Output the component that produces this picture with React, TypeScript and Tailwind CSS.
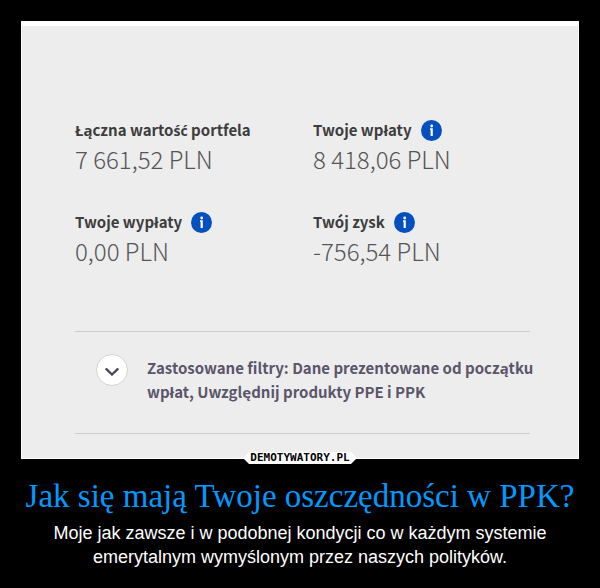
import type { ReactNode } from "react";

function InfoButton({ label }: { label: string }) {
  return (
    <button type="button" aria-label={label} className="flex size-[21px] items-center justify-center rounded-full bg-[#0550bf]">
      <svg viewBox="0 0 21 21" className="size-[21px]" fill="#fff" aria-hidden="true">
        <circle cx="10.7" cy="6" r="1.4" />
        <path d="M9 8.3h2.8v7.6H9.6v-6.2H9z" />
      </svg>
    </button>
  );
}

function Stat({ label, value, info }: { label: ReactNode; value: string; info?: string }) {
  return (
    <div>
      <dt className="flex h-6 items-center gap-[9px] text-[15px] font-bold whitespace-nowrap text-[#3d3d3d]">
        <span>{label}</span>
        {info && <InfoButton label={info} />}
      </dt>
      <dd className="h-9 text-[24px] leading-[34px] font-light whitespace-nowrap text-[#555]">{value}</dd>
    </div>
  );
}

function Panel({ children }: { children: ReactNode }) {
  return (
    <section className="border border-t-[5px] border-white bg-[#ededed] px-[53px] pt-[92px] pb-6 font-['Noto_Sans_CJK_JP','Noto_Sans',sans-serif]">
      {children}
    </section>
  );
}

export default function App() {
  return (
    <main className="min-h-screen bg-black px-[21px] pt-[21px]">
      <div className="relative">
        <Panel>
          <dl className="grid grid-cols-[238px_1fr] gap-y-8">
            <Stat
              label={
                <>
                  Łączna warto<span className="font-['Open_Sans',sans-serif] text-[14px]">ść</span> portfela
                </>
              }
              value="7 661,52 PLN"
            />
            <Stat label="Twoje wpłaty" value="8 418,06 PLN" info="Informacje o wpłatach" />
            <Stat label="Twoje wypłaty" value="0,00 PLN" info="Informacje o wypłatach" />
            <Stat label="Twój zysk" value="-756,54 PLN" info="Informacje o zysku" />
          </dl>
          <div className="mr-[-5px] mt-[61px] flex h-[103px] items-start gap-[19px] border-y border-[#c9cdcc] pt-[22px] pl-[21px]">
            <button
              type="button"
              aria-label="Rozwiń filtry"
              className="flex size-8 shrink-0 items-center justify-center rounded-full border border-[#d2d2d2] bg-white"
            >
              <svg viewBox="0 0 14 8" className="mt-1 h-2 w-3.5" fill="none" stroke="#4b455c" strokeWidth="2.3" strokeLinecap="round" aria-hidden="true">
                <path d="M1.4 1.2L7 6.5l5.6-5.3" />
              </svg>
            </button>
            <p className="pt-0.5 text-[15px] leading-6 font-bold whitespace-nowrap text-[#5a556b]">
              Zastosowane filtry: Dane prezentowane od początku
              <br />
              wpłat, Uwzględnij produkty PPE i PPK
            </p>
          </div>
        </Panel>
        <a
          href="#"
          className="absolute -bottom-[5px] left-1/2 flex h-3 w-[114px] -translate-x-1/2 items-center justify-center bg-white font-['DejaVu_Sans_Mono',monospace] text-[11px] leading-3 font-bold text-black [clip-path:polygon(6px_0,calc(100%-6px)_0,100%_6px,calc(100%-6px)_100%,6px_100%,0_6px)]"
        >
          DEMOTYWATORY.PL
        </a>
      </div>
      <h1 className="-mx-5 mt-[19px] text-center font-['Liberation_Serif',serif] text-[33px] leading-9 text-[#0099ff]">
        Jak się mają Twoje oszczędności w PPK?
      </h1>
      <p className="mt-[7px] text-center font-['Liberation_Sans',sans-serif] text-[18px] leading-6 text-white">
        Moje jak zawsze i w podobnej kondycji co w każdym systemie emerytalnym wymyślonym przez naszych polityków.
      </p>
    </main>
  );
}
